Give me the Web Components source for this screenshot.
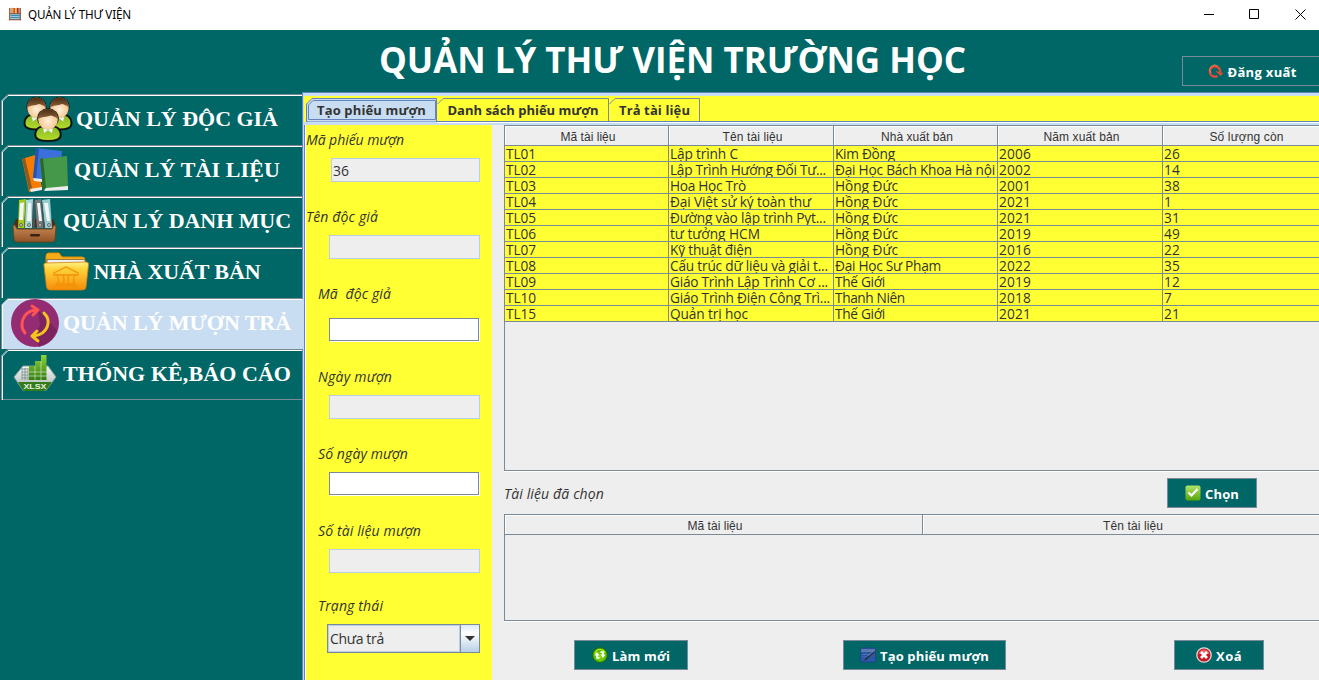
<!DOCTYPE html>
<html lang="vi">
<head>
<meta charset="utf-8">
<title>QUẢN LÝ THƯ VIỆN</title>
<style>
html,body{margin:0;height:100%;overflow:hidden}
body{font-family:"Open Sans","Noto Sans",sans-serif;font-size:14px;color:#333}
</style>
</head>
<body>
<library-app></library-app>
<script>
const define=(name,html,setup)=>customElements.define(name,class extends HTMLElement{
  connectedCallback(){
    if(this.shadowRoot)return;
    this.attachShadow({mode:'open'}).innerHTML=typeof html==='function'?html(this):html;
    if(setup)setup(this);
  }
});

/* Single line of text, tracked so that it takes the width given in "w". */
define('fit-text','<style>:host{display:inline-block;white-space:pre;flex:none}span{display:inline-block}</style><span><slot></slot></span>',el=>{
  const s=el.shadowRoot.querySelector('span'),w=+el.getAttribute('w');
  if(!w)return;
  el.style.width=w+'px';
  const n=s.getBoundingClientRect().width,c=el.textContent.length;
  if(c>1&&n)s.style.letterSpacing=((w-n)/(c-.5)).toFixed(3)+'px';
});

const ICONS={
people:`<svg viewBox="0 0 48 48"><defs><radialGradient id="f" cx=".5" cy=".6" r=".6"><stop offset="0" stop-color="#fff0da"/><stop offset="1" stop-color="#f3b87c"/></radialGradient><linearGradient id="h" x1="0" y1="0" x2="0" y2="1"><stop offset="0" stop-color="#4b2a12"/><stop offset="1" stop-color="#8d643c"/></linearGradient><linearGradient id="b" x1="0" y1="0" x2="0" y2="1"><stop offset="0" stop-color="#86b52a"/><stop offset="1" stop-color="#b4dd28"/></linearGradient>
<g id="p"><path d="M-13 14C-13 6-7 4 0 4S13 6 13 14C13 20 6 20.500 0 20.500S-13 20-13 14Z" fill="url(#b)" stroke="#111" stroke-width="2"/><circle cy="-4" r="11" fill="#111"/><path d="M-10-3C-10-18 10-18 10-3C10 4 5 8 0 8S-10 4-10-3Z" fill="url(#f)"/><path d="M-5 7L-4 12L0 9L4 12L5 7L0 8.500Z" fill="#eef4f6"/><path d="M-10-3C-11-18 11-18 10-3C8-6 5-6 3-7C-2-5-7-6-10-3Z" fill="url(#h)"/></g></defs>
<use href="#p" transform="translate(12.500 15.500) scale(.92)"/><use href="#p" transform="translate(35.500 15.500) scale(.92)"/><use href="#p" transform="translate(24 27) scale(.98 .92)"/></svg>`,
books:`<svg viewBox="0 0 48 48"><path d="M0 13L13 9L20 42L7 46Z" fill="#f57c00"/><path d="M0 13L3 12L10 42L7 44Z" fill="#8b5a24"/><path d="M8 43L20 41L20 44L9 46Z" fill="#eee"/><path d="M14 2L40 5L37 36L11 33Z" fill="#3b70dc"/><path d="M14 2L17 2.500L14 33L11 33Z" fill="#2455ad"/><path d="M11 32L20 33V36L12 35Z" fill="#eee"/><path d="M18 13L45 10L46 42L21 44Z" fill="#459849"/><path d="M18 13L21 12L24 42L21 44Z" fill="#276b2b"/><path d="M24 42L46 40V44L22 45Z" fill="#eee"/></svg>`,
binders:`<svg viewBox="0 0 48 48"><defs><linearGradient id="w" x1="0" y1="0" x2="0" y2="1"><stop offset="0" stop-color="#c98a55"/><stop offset="1" stop-color="#915427"/></linearGradient></defs><path d="M5 22H42L45 30H2Z" fill="#4e2c12"/><path d="M8 3L15 2L13 31H7Z" fill="#a1c91e"/><path d="M15 2L17 4L15 31H13Z" fill="#668014"/><path d="M15 3L22 2L21 31H14Z" fill="#a8dadd"/><path d="M24 3L30 2L33 31H26Z" fill="#777b7d"/><path d="M31 3L39 2L41 31H34Z" fill="#95cdd2"/><path d="M9 6L13 5.500L12 23H8ZM17 6L20 6V24H16ZM26 6L29 6L31 24H28ZM33 6L37 6L39 24H36Z" fill="#f4f4f2"/><path d="M22 3L24 4V31H21ZM30 4L31 4L34 31H32Z" fill="#3e5559"/><g fill="#ccc" stroke="#555" stroke-width=".8"><circle cx="10" cy="28" r="1.500"/><circle cx="18" cy="28" r="1.500"/><circle cx="29" cy="28" r="1.500"/><circle cx="38" cy="28" r="1.500"/></g><path d="M2 29Q2 28 4 28L6 32H41L43 28Q45 28 45 30L44 42Q44 45 41 45H6Q3 45 3 42Z" fill="url(#w)" stroke="#70401d"/><rect x="19" y="37" width="10" height="2.500" rx="1.200" fill="#3a2110"/></svg>`,
folder:`<svg viewBox="0 0 48 48"><defs><linearGradient id="y" x1="0" y1="0" x2="0" y2="1"><stop offset="0" stop-color="#fff08a"/><stop offset=".25" stop-color="#ffd43b"/><stop offset="1" stop-color="#f68b0a"/></linearGradient></defs><path d="M4 12V8Q4 5 7 5H17L20 9H40Q43 9 43 12V15H4Z" fill="#f7ab16" stroke="#dd8d05"/><path d="M5 15V11.500H43V18H5Z" fill="#eee" stroke="#735423" stroke-width=".7"/><path d="M2 18Q1 15 4 15L44 14Q47 14 46.500 17L44 39Q44 42 40 42H8Q5 42 4.500 39Z" fill="url(#y)" stroke="#d68009" stroke-width=".8"/><path d="M12 25L24 19L36 25V27H12ZM14 36H34M12 38H36M15 27Q18 32 15 36M21 27Q23 32 21 36M27 27Q25 32 27 36M33 27Q30 32 33 36" fill="none" stroke="#f49106" stroke-width="1.300"/></svg>`,
swap:`<svg viewBox="0 0 48 48"><circle cx="24" cy="24" r="24" fill="#942c73"/><path d="M27 11L46 31Q41 44 28 48L21 37L29 27Z" fill="#7b245f"/><g fill="none" stroke-width="3" stroke-linecap="round" stroke-linejoin="round"><path d="M14 34C8 27 11 13 24 11H27M21 7L27 11L22 16" stroke="#ff5252"/><path d="M33 14C41 22 37 35 23 37H21M26 32L21 37L27 42" stroke="#f5c51a"/></g></svg>`,
xlsx:`<svg viewBox="0 0 48 48"><defs><linearGradient id="g" x1="0" y1="0" x2="0" y2="1"><stop offset="0" stop-color="#8fd23a"/><stop offset="1" stop-color="#347d13"/></linearGradient><linearGradient id="m" x1="0" y1="0" x2="0" y2="1"><stop offset="0" stop-color="#f5f7f7"/><stop offset="1" stop-color="#a6b1ae"/></linearGradient></defs><path d="M3 27L12 16H37L45 27L35 40.500H12Z" fill="url(#m)" stroke="#88a19b"/><path d="M18 30V16H24V11H30V5H35.500V30Z" fill="url(#g)"/><path d="M24 16V30M30 11V30M18 22H36M18 26H36" stroke="#e1efd9" stroke-width=".6"/><path d="M11 19H17M11 22H17M11 25H17M11 28H17M11 18V30M14 18V30M17 18V30" stroke="#768a86" stroke-width=".8"/><path d="M7 32H41L36 39Q35 41 32 41H15Q12 41 11 39Z" fill="#347b1c"/><text x="24" y="39.300" text-anchor="middle" textLength="23" lengthAdjust="spacingAndGlyphs" letter-spacing="0" font-family="Liberation Sans" font-size="8" font-weight="700" fill="#e6f2df">XLSX</text></svg>`,
logo:`<svg viewBox="0 0 14 16"><path d="M1 1V15M13 1V15" stroke="#9a684c" stroke-width="1.800"/><path d="M2 1H5V7H2Z" fill="#d5a76a"/><path d="M5 1H7V7H5ZM11 1H12V7H11Z" fill="#d94837"/><path d="M7 1H9V7H7Z" fill="#ffc928"/><path d="M9 1H11V7H9Z" fill="#9d2b25"/><path d="M1 7.500H14M0 14.500H14" stroke="#8a6550" stroke-width="1.300"/><path d="M2 9.500H12.500M2 12H12.500" stroke="#3a8fb5" stroke-width="2"/></svg>`,
logout:`<svg viewBox="0 0 16 16"><path d="M9.500 13A5.200 5.200 0 1 1 12 7.500L12.500 9" fill="none" stroke="#e84b30" stroke-width="2.300"/><path d="M7.500 8L15.500 10L12.500 13Z" fill="#e84b30"/><path d="M3 10A4.800 4.800 0 0 1 9.500 3" fill="none" stroke="#ff8d6c" stroke-width=".8"/></svg>`,
check:`<svg viewBox="0 0 16 16"><defs><linearGradient id="c" x1="0" y1="0" x2="0" y2="1"><stop offset="0" stop-color="#b1e468"/><stop offset="1" stop-color="#55a50d"/></linearGradient></defs><rect x=".5" y=".5" width="15" height="15" rx="2" fill="url(#c)"/><path d="M3.500 7.500L6.500 10.500L12.500 4" fill="none" stroke="#fff" stroke-width="2.200"/></svg>`,
refresh:`<svg viewBox="0 0 16 16"><defs><radialGradient id="r" cx=".5" cy=".6" r=".6"><stop offset="0" stop-color="#8ee60a"/><stop offset="1" stop-color="#3f9f08"/></radialGradient></defs><circle cx="8" cy="8" r="7.500" fill="url(#r)" stroke="#146b13"/><path d="M3 7A5 5 0 0 1 8 2.500Q12 2.500 13 6" fill="none" stroke="#b9f500" stroke-width="1.200"/><path d="M2.500 8.500L5 5L7.500 8.500H6V10H7.500V11.800H4.200V8.500ZM13.500 7.500L11 11L8.500 7.500H10V6H8.500V4.200H11.800V7.500Z" fill="#fff"/></svg>`,
edit:`<svg viewBox="0 0 16 16"><rect x=".5" y="1" width="15" height="14" rx="1" fill="#2b57a0" stroke="#1d468b"/><path d="M1 2H15V5H1Z" fill="#5d78a6"/><path d="M2 7.500H12M2 10H9M2 4.500H14" stroke="#5685cc" stroke-width=".6"/><path d="M14.500 4.500L7 11L5 13" stroke="#222936" stroke-width="1.500" fill="none"/><path d="M14 4L8 9" stroke="#aaa" stroke-width=".5"/></svg>`,
remove:`<svg viewBox="0 0 16 16"><circle cx="8" cy="8" r="7.200" fill="#c81722" stroke="#ddd" stroke-width="1.300"/><path d="M2.500 7Q3 3 8 2.500Q13 3 13.500 7" fill="#e66067"/><path d="M5 5L11 11M11 5L5 11" stroke="#fff" stroke-width="2.800"/></svg>`
};
define('app-icon',el=>`<style>:host{display:block;flex:none;width:${el.getAttribute('size')||16}px;height:${el.getAttribute('size')||16}px}svg{display:block;width:100%;height:100%;overflow:visible}</style>${ICONS[el.getAttribute('name')]}`);

define('title-bar',`<style>
:host{display:flex;height:30px;align-items:center;background:#fff;color:#000;font-family:"Noto Sans","Open Sans",sans-serif;font-size:11.700px;box-sizing:border-box;padding:0 13px 0 8px}
app-icon{margin-right:6px;position:relative;top:-1px}fit-text{line-height:28px;height:30px;flex:1}.ctl{display:flex;gap:35px;position:relative;top:-1px}.ctl svg{display:block;width:11px;height:11px}.ctl svg:first-child{margin-right:-1px}
</style><app-icon name="logo" size="14"></app-icon><fit-text w="103">QUẢN LÝ THƯ VIỆN</fit-text><div style="flex:1"></div>
<div class="ctl"><svg><path d="M0 5.500H10" stroke="#000"/></svg><svg><path d="M.5.500H9.500V9.500H.5Z" fill="none" stroke="#000"/></svg><svg><path d="M.5.500L10.500 10.500M10.500.500L.5 10.500" stroke="#000"/></svg></div>`);

define('action-button',el=>`<style>:host{display:flex;box-sizing:border-box;height:30px;align-items:center;justify-content:center;gap:4px;background:#066;border:1px solid #7a8a99;color:#fff;font-weight:700;font-size:13px;line-height:28px;flex:none}fit-text{position:relative;top:1px}</style>
<app-icon name="${el.getAttribute('icon')}"></app-icon><fit-text w="${el.getAttribute('w')}">${el.getAttribute('label')}</fit-text>`);

define('app-header',`<style>:host{display:flex;height:62px;background:#066;color:#fff}
.side{width:302px}.mid{flex:1;display:flex;box-sizing:border-box;padding-left:77px}h1{margin:0;font-size:35px;line-height:60px;font-weight:700}
action-button{width:152px;padding-right:12px;margin:26px -15px 0 0}</style>
<div class="side"></div><div class="mid"><h1><fit-text w="587">QUẢN LÝ THƯ VIỆN TRƯỜNG HỌC</fit-text></h1></div><action-button icon="logout" w="69" label="Đăng xuất"></action-button>`);

define('nav-item',el=>`<style>:host{display:flex;position:relative;width:302px;height:51px;align-items:center;justify-content:center;gap:4px;color:#fff;font:700 22px/51px "Liberation Serif",serif}
.edge{position:absolute;left:0;top:0;width:304px;height:51px;z-index:0}app-icon,fit-text{position:relative}app-icon{top:-1px}fit-text{top:-1px}</style>
<svg class="edge">${el.hasAttribute('active')?'<path d="M2 51V7L8 1H304V51Z" fill="#c8ddf2"/>':''}<path d="M1.500 51V6.500L7.500.5H302" fill="none" stroke="#7a8a99"/><path d="M2.500 51V7L8 1.500H302" fill="none" stroke="#fff"/></svg>
<app-icon name="${el.getAttribute('icon')}" size="48"></app-icon><fit-text w="${el.getAttribute('w')}"><slot></slot></fit-text>`,el=>{
  /* the tracked run is the slotted label, so its length comes from the host */
  const f=el.shadowRoot.querySelector('fit-text'),s=f.shadowRoot.querySelector('span');
  s.style.letterSpacing='0';
  const n=s.getBoundingClientRect().width;
  s.style.letterSpacing=((+el.getAttribute('w')-n)/(el.textContent.length-.5)).toFixed(3)+'px';
});

define('side-nav',`<style>:host{display:block;width:302px;flex:none;background:#066;padding-top:2px;box-sizing:border-box}.list{border-bottom:1px solid #7a8a99;height:305px;margin-left:1px;width:301px}nav-item{margin-left:-1px}</style>
<div class="list"><nav-item icon="people" w="202">QUẢN LÝ ĐỘC GIẢ</nav-item><nav-item icon="books" w="206">QUẢN LÝ TÀI LIỆU</nav-item><nav-item icon="binders" w="228">QUẢN LÝ DANH MỤC</nav-item><nav-item icon="folder" w="167">NHÀ XUẤT BẢN</nav-item><nav-item icon="swap" active w="228">QUẢN LÝ MƯỢN TRẢ</nav-item><nav-item icon="xlsx" w="228">THỐNG KÊ,BÁO CÁO</nav-item></div>`);

define('page-tabs',`<style>:host{display:flex;height:29px;box-sizing:border-box;background:#ff3;padding:2px 0 0 2px;font-weight:700;font-size:13px;line-height:24px;position:relative}
:host::after{content:"";position:absolute;left:133px;right:0;bottom:0;height:4px;background:linear-gradient(#6382bf 1px,#fff 1px,#fff 2px,#c8ddf2 2px)}
.lip{position:absolute;left:0;width:134px;bottom:0;height:3px;background:#c8ddf2}
.t{position:relative;height:24px;display:flex;justify-content:center}.t svg{position:absolute;left:0;top:0;width:100%;height:24px}.t fit-text{position:relative}</style>
<div class="lip"></div>
<div class="t" style="width:131px"><svg><path d="M.5 24V6L6 .5H130.500V24Z" fill="#c8ddf2" stroke="#6382bf"/><path d="M2.500 21.500V7L7 2.500H129.500V21.500Z" fill="none" stroke="#6382bf"/></svg><fit-text w="109">Tạo phiếu mượn</fit-text></div>
<div class="t" style="width:172px"><svg><path d="M.5 6L6 .5H171.500V24" fill="none" stroke="#7a8a99"/></svg><fit-text w="151">Danh sách phiếu mượn</fit-text></div>
<div class="t" style="width:91px"><svg><path d="M.5 6L6 .5H90.500V24" fill="none" stroke="#7a8a99"/></svg><fit-text w="71">Trả tài liệu</fit-text></div>`);

define('form-field',el=>{const k=el.getAttribute('kind'),x=el.getAttribute('x')||23,combo=k==='combo';return `<style>:host{display:block}
.l{font-style:italic;font-size:14px;line-height:21px;height:20px;padding-left:${el.getAttribute('lx')||12}px}
.b{box-sizing:border-box;margin-left:${x}px;margin-top:${el.getAttribute('gap')||9}px;width:${174-x}px;height:${combo?29:24}px;background:${k==='on'?'#fff':'#eee'};border:1px solid ${k?'#7a8a99':'#b8cfe5'};line-height:${combo?27:23}px;padding-left:1px;display:flex;${k==='on'?'box-shadow:1px 1px #fff;width:150px;height:23px;margin-bottom:1px;':''}}
.a{margin-left:auto;width:18px;height:27px;border-left:1px solid #7a8a99;box-shadow:-1px 0 #b8cfe5;background:linear-gradient(#dde8f3,#fff 30%,#b8cfe5)}.a svg{display:block}
.combo{box-shadow:inset 1px 1px #b8cfe5,inset 0 -1px #b8cfe5;padding-left:2px}</style>
<div class="l"><fit-text w="${el.getAttribute('w')}">${el.getAttribute('label')}</fit-text></div>
<div class="b ${combo?'combo':''}">${el.getAttribute('value')?`<fit-text w="${el.getAttribute('vw')}">${el.getAttribute('value')}</fit-text>`:''}${combo?'<div class="a"><svg width="18" height="27"><path d="M4 11H14L9 16Z" fill="#333"/></svg></div>':''}</div>`});

define('loan-form',`<style>:host{display:flex;flex-direction:column;width:186px;flex:none;background:#ff3;box-sizing:border-box;padding-top:4px}</style>
<form-field label="Mã phiếu mượn" w="98" lx="0" x="25" value="36" vw="16"></form-field>
<form-field style="margin-top:24px" label="Tên độc giả" w="72" lx="0"></form-field>
<form-field style="margin-top:24px" label="Mã  độc giả" w="73" kind="on" gap="15"></form-field>
<form-field style="margin-top:24px" label="Ngày mượn" w="74"></form-field>
<form-field style="margin-top:24px" label="Số ngày mượn" w="90" kind="on"></form-field>
<form-field style="margin-top:24px" label="Số tài liệu mượn" w="103"></form-field>
<form-field style="margin-top:22px" label="Trạng thái" w="65" kind="combo" x="21" value="Chưa trả" vw="54"></form-field>`);

define('data-table',`<style>:host{display:block;box-sizing:border-box;border:solid #7a8a99;border-width:1px 0 1px 1px;box-shadow:0 1px #fff;overflow:hidden;color:#333}
.r{display:grid;width:max-content}.h{height:20px;box-sizing:border-box;border-bottom:1px solid #7a8a99;font:12px/22px "Liberation Sans",sans-serif;text-align:center}
.h div{height:19px;border-right:1px solid #7a8a99;box-shadow:inset 1px 1px #fff;padding-left:3px}
.d{height:16px;box-sizing:border-box;border-bottom:1px solid #7a8a99;background:#ff3;font-size:13.700px;line-height:16px}.d div{border-right:1px solid #7a8a99;overflow:hidden;height:15px;padding-left:1px}</style><div id="g"></div>`,el=>{
  const row=(c,cells)=>`<div class="r ${c}" style="grid-template-columns:${el.cols}">${cells.map(([t,w])=>`<div><fit-text w="${w}">${t}</fit-text></div>`).join('')}</div>`;
  el.draw=(cols,head,rows)=>{el.cols=cols;el.shadowRoot.querySelector('#g').innerHTML=row('h',head)+rows.map(r=>row('d',r)).join('')};
});

define('loan-panel',`<style>:host{display:block;flex:1;min-width:0;background:#eee;padding-left:12px}
#a{height:346px}#b{height:107px}.mid{height:43px;display:flex;box-sizing:border-box;padding-top:7px}.mid fit-text{font-style:italic;font-size:14px;line-height:32px}.mid action-button{width:90px;margin-left:auto;margin-right:62px}
.acts{display:flex;padding:19px 0 0 70px}</style>
<data-table id="a"></data-table><div class="mid"><fit-text w="100">Tài liệu đã chọn</fit-text><action-button icon="check" w="34" label="Chọn"></action-button></div><data-table id="b"></data-table>
<div class="acts"><action-button style="width:114px" icon="refresh" w="58" label="Làm mới"></action-button><action-button style="width:163px;margin:0 168px 0 155px" icon="edit" w="109" label="Tạo phiếu mượn"></action-button><action-button style="width:90px" icon="remove" w="26" label="Xoá"></action-button></div>`,el=>{
  const q=s=>el.shadowRoot.querySelector(s);
  const H=['Hồng Đức',63],G=['Thế Giới',50];
  const data=[
    ['TL01',['Lập trình C',68],['Kim Đồng',60],2006,26],
    ['TL02',['Lập Trình Hướng Đối Tư...',156],['Đại Học Bách Khoa Hà nội',160],2002,14],
    ['TL03',['Hoa Học Trò',76],H,2001,38],
    ['TL04',['Đại Việt sử ký toàn thư',141],H,2021,1],
    ['TL05',['Đường vào lập trình Pyt...',156],H,2021,31],
    ['TL06',['tư tưởng HCM',90],H,2019,49],
    ['TL07',['Kỹ thuật điện',82],H,2016,22],
    ['TL08',['Cấu trúc dữ liệu và giải t...',158],['Đại Học Sư Phạm',106],2022,35],
    ['TL09',['Giáo Trình Lập Trình Cơ ...',158],G,2019,12],
    ['TL10',['Giáo Trình Điện Công Trì...',160],['Thanh Niên',70],2018,7],
    ['TL15',['Quản trị học',78],G,2021,21]];
  q('#a').draw('164px 165px 164px 165px 165px',[['Mã tài liệu',55],['Tên tài liệu',60],['Nhà xuất bản',72],['Năm xuất bản',76],['Số lượng còn',74]],
    data.map(([a,b,c,d,e])=>[[a,30],b,c,[d,32],[e,e>9?16:0]]));
  q('#b').draw('418px 418px',[['Mã tài liệu',55],['Tên tài liệu',60]],[]);
});

define('library-app',`<style>:host{display:flex;flex-direction:column;width:1319px;height:680px;overflow:hidden;background:#066}
.main{display:flex;flex:1;min-height:0}.content{flex:1;min-width:0;display:flex;flex-direction:column;border:solid #6382bf;border-width:1px 0 0 1px}
.inner{flex:1;min-height:0;display:flex;flex-direction:column;border:solid #c8ddf2;border-width:3px 0 0 1px}
.page{flex:1;min-height:0;display:flex;border-left:1px solid #6382bf;box-shadow:inset 1px 0 #fff;padding-left:1px}</style>
<title-bar></title-bar><app-header></app-header><div class="main"><side-nav></side-nav><div class="content"><div class="inner"><page-tabs></page-tabs><div class="page"><loan-form></loan-form><loan-panel></loan-panel></div></div></div></div>`);
</script>
</body>
</html>
